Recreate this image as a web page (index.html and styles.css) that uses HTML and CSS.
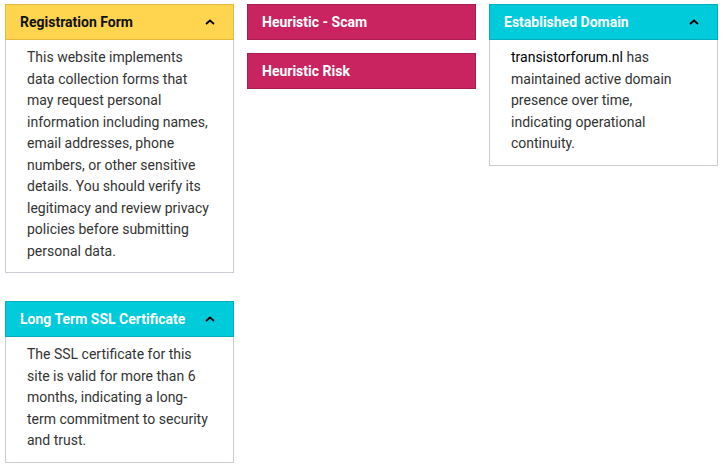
FILE: index.html
```html
<!DOCTYPE html>
<html lang="en">
<head>
    <meta charset="UTF-8">
    <title>Site Signals</title>
    <link rel="stylesheet" href="styles.css">
</head>
<body>
<div class="board">
    <!-- Column 1 -->
    <div class="column spaced">
        <div class="card">
            <div class="card-head yellow">
                <span>Registration Form</span>
                <svg class="chevron" width="10" height="6" viewBox="0 0 10 6"><polyline points="1,5 5,1.5 9,5" fill="none" stroke="#000" stroke-width="1.8"/></svg>
            </div>
            <div class="card-body">
                This website implements data collection forms that may request personal information including names, email addresses, phone numbers, or other sensitive details. You should verify its legitimacy and review privacy policies before submitting personal data.
            </div>
        </div>
        <div class="card">
            <div class="card-head cyan">
                <span>Long Term SSL Certificate</span>
                <svg class="chevron" width="10" height="6" viewBox="0 0 10 6"><polyline points="1,5 5,1.5 9,5" fill="none" stroke="#000" stroke-width="1.8"/></svg>
            </div>
            <div class="card-body">
                The SSL certificate for this site is valid for more than 6 months, indicating a long-term commitment to security and trust.
            </div>
        </div>
    </div>

    <!-- Column 2 -->
    <div class="column">
        <div class="card">
            <div class="card-head magenta"><span>Heuristic - Scam</span></div>
        </div>
        <div class="card">
            <div class="card-head magenta"><span>Heuristic Risk</span></div>
        </div>
    </div>

    <!-- Column 3 -->
    <div class="column">
        <div class="card">
            <div class="card-head cyan">
                <span>Established Domain</span>
                <svg class="chevron" width="10" height="6" viewBox="0 0 10 6"><polyline points="1,5 5,1.5 9,5" fill="none" stroke="#000" stroke-width="1.8"/></svg>
            </div>
            <div class="card-body">
                <span class="domain">transistorforum.nl</span> has maintained active domain presence over time, indicating operational continuity.
            </div>
        </div>
    </div>
</div>
</body>
</html>
```

FILE: styles.css
```css
/* Signal cards */
body {
  margin: 0;
  font-family: Roboto, "Liberation Sans", Arial, sans-serif;
  font-size: 14px;
  color: #333;
  background: #fff;
}
.board {
  display: flex;
  gap: 13px;
  padding: 4px 0 0 5px;
  align-items: flex-start;
}
.column {
  width: 229px;
  display: flex;
  flex-direction: column;
  gap: 13px;
}
.column.spaced {
  gap: 28px;
}
.card {
  background: #fff;
}
.card-head {
  height: 36px;
  box-sizing: border-box;
  display: flex;
  align-items: center;
  justify-content: space-between;
  padding: 0 18px 0 14px;
  font-weight: bold;
  border: 1px solid;
}
.card-head.yellow {
  background-color: #ffd54f;
  border-color: #e2b93f;
  color: #111;
}
.card-head.cyan {
  background-color: #00cbdb;
  border-color: #00aebd;
  color: #fff;
}
.card-head.magenta {
  background-color: #c9245f;
  border-color: #a81c4e;
  color: #fff;
}
.chevron {
  display: block;
}
.card-body {
  border: 1px solid #c9ccd6;
  border-top: none;
  padding: 7px 21px 10px 21px;
  line-height: 21.5px;
}
.domain {
  color: #000;
}
```
